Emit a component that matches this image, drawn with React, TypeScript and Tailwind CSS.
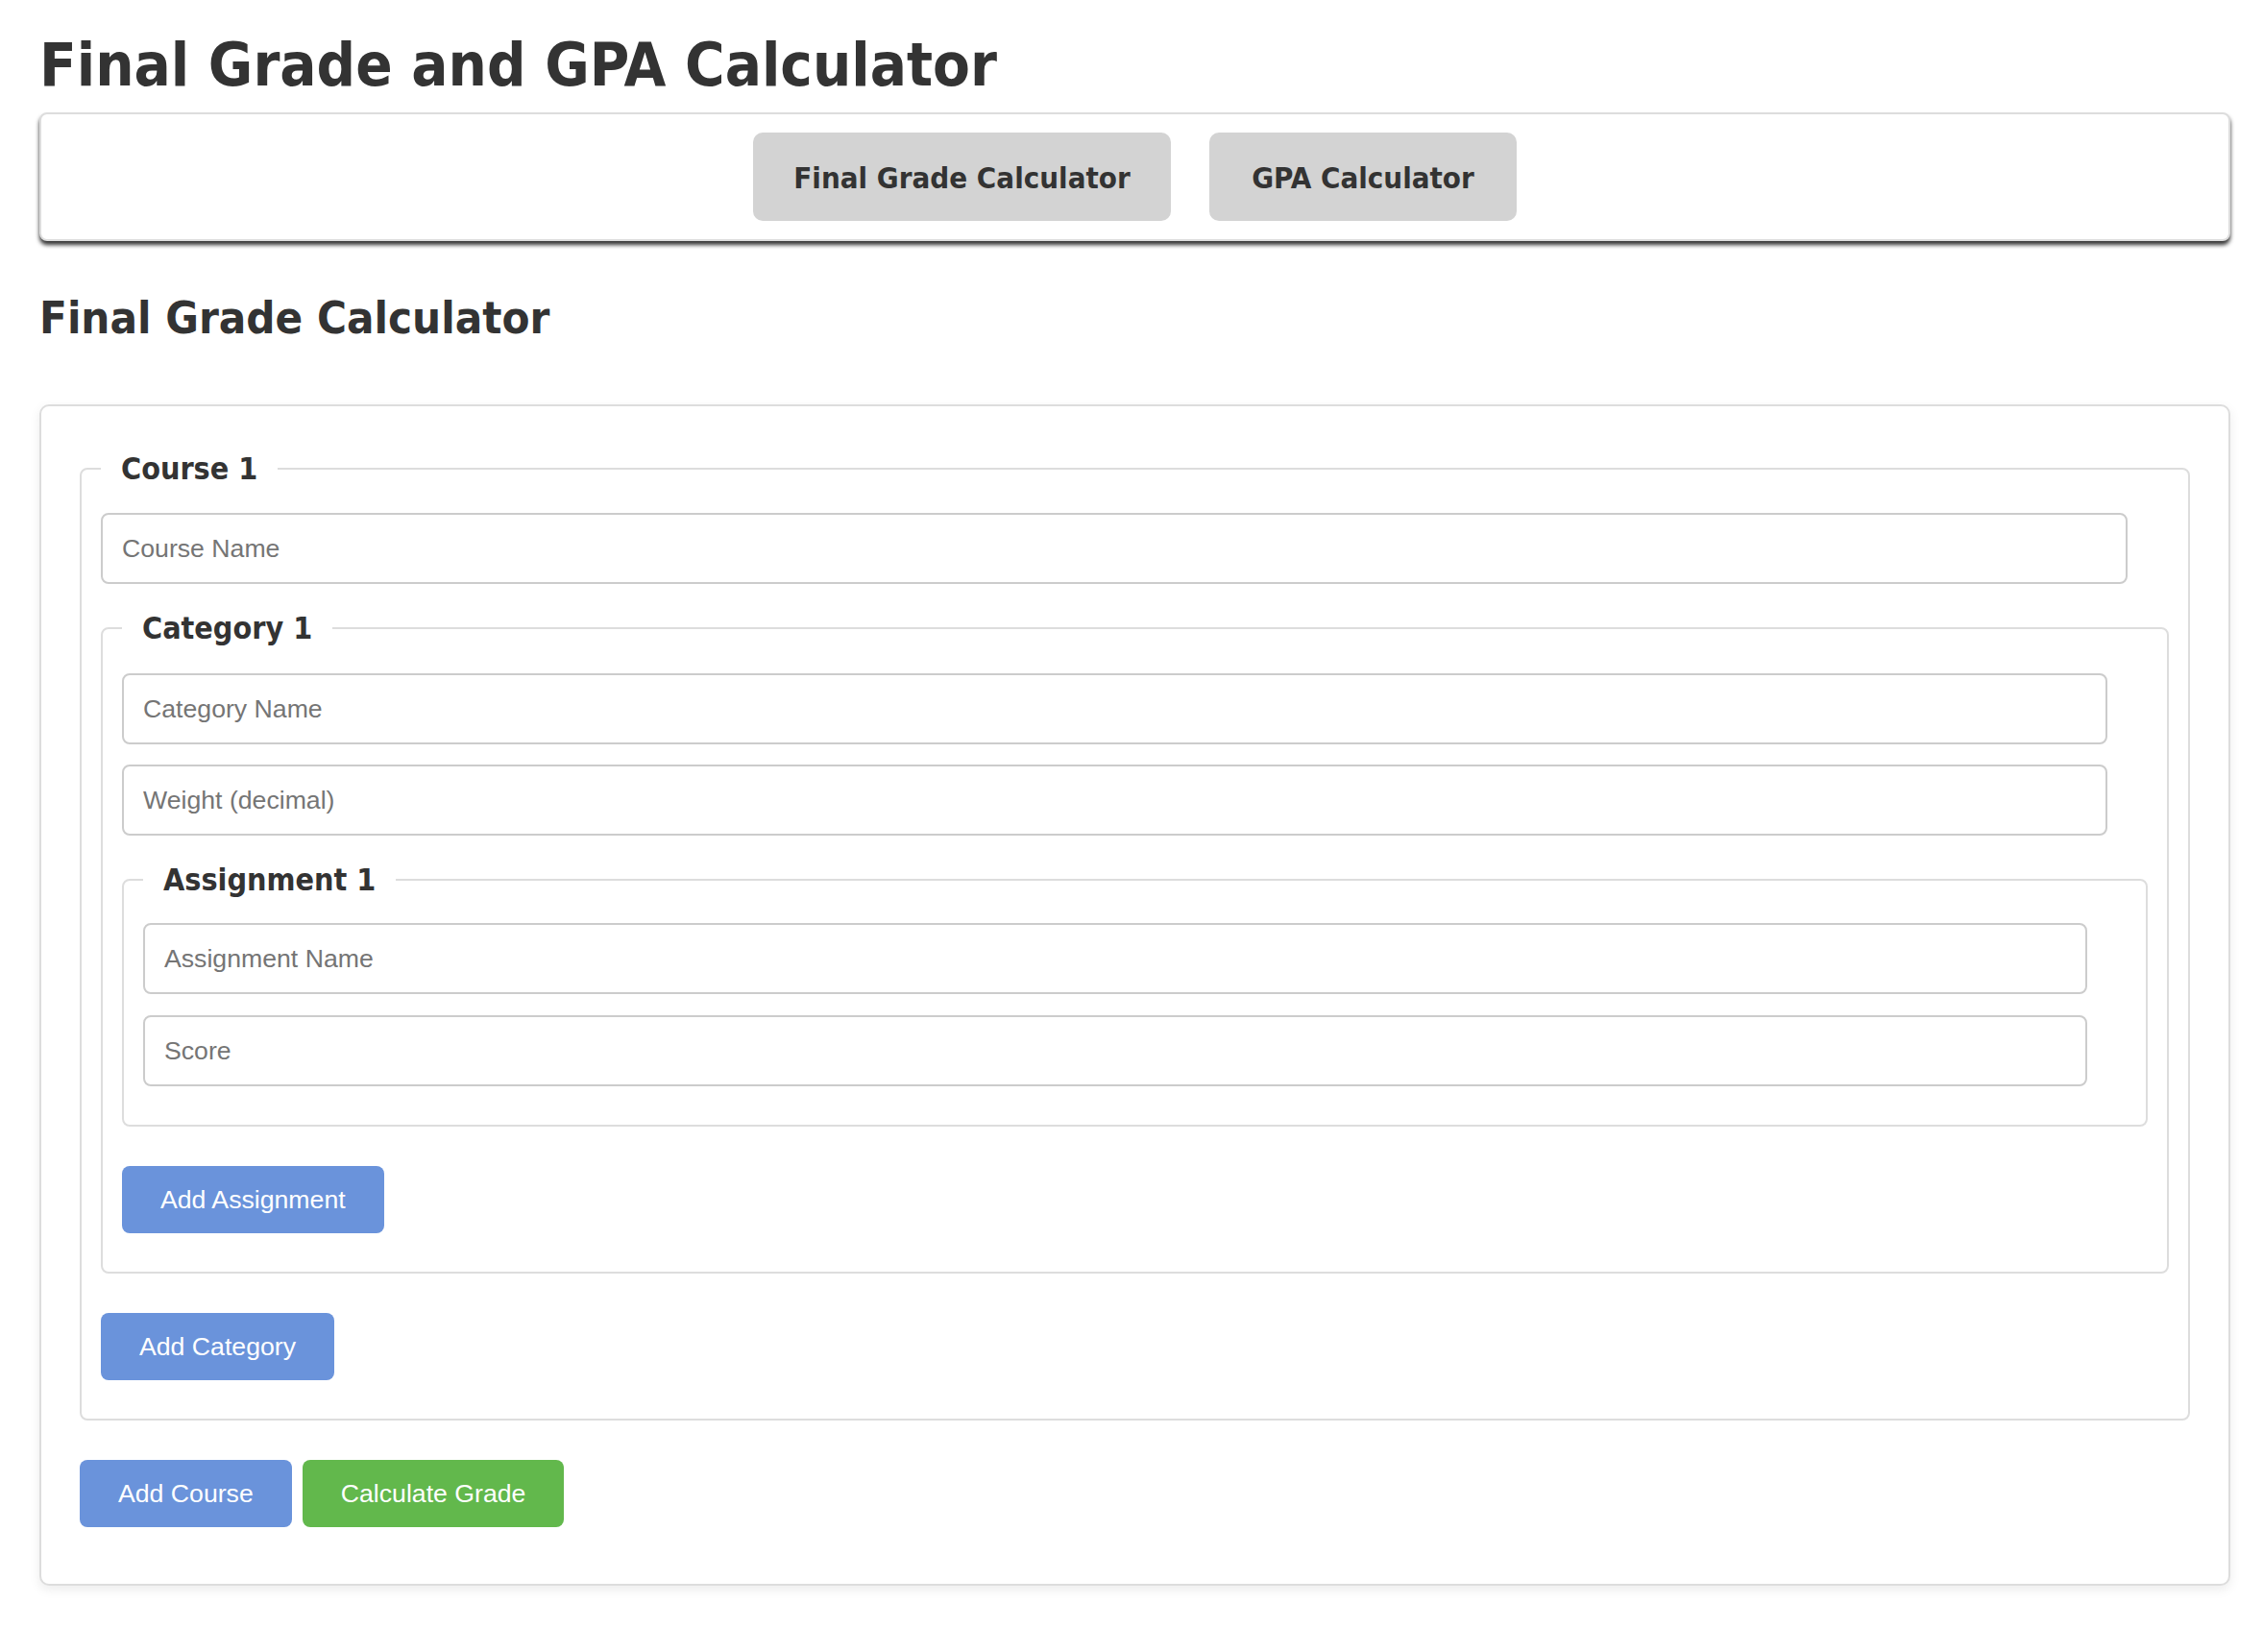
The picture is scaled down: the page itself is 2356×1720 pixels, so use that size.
import React from "react";

const head = "font-['DejaVu_Sans_Condensed','DejaVu_Sans',sans-serif] font-stretch-condensed font-bold";
const ui = "font-['Liberation_Sans',Arial,sans-serif]";

function Input({ placeholder, className = "" }: { placeholder: string; className?: string }) {
  return (
    <input
      type="text"
      placeholder={placeholder}
      className={`${ui} block box-border h-[74px] w-[98%] rounded-[8px] border-2 border-[#cccccc] bg-white px-[20px] text-[26.67px] text-[#333] placeholder:text-[#757575] outline-none ${className}`}
    />
  );
}

function Legend({ children }: { children: React.ReactNode }) {
  return (
    <legend className={`${head} px-[21px] text-[32px] leading-[40px] text-[#333]`}>{children}</legend>
  );
}

function Btn({ children, color, className = "" }: { children: React.ReactNode; color: "blue" | "green"; className?: string }) {
  return (
    <button
      type="button"
      className={`${ui} h-[70px] rounded-[8px] px-[40px] text-[26.67px] text-white ${
        color === "blue" ? "bg-[#6a93db]" : "bg-[#62b84c]"
      } ${className}`}
    >
      {children}
    </button>
  );
}

export default function App() {
  return (
    <div className="min-h-screen w-full bg-white text-[#333]">
      <div className="ml-[41px] w-[2281px] pb-[60px]">
        <h1 className={`${head} pt-[36px] text-[63px] leading-[64px]`}>Final Grade and GPA Calculator</h1>

        <div className="mt-[17px] flex justify-center gap-[40px] rounded-[8px] border-2 border-[#dddddd] bg-white py-[19px] shadow-[0_4px_4px_rgba(0,0,0,0.8)]">
          <button type="button" className={`${head} h-[92px] w-[435px] rounded-[10px] bg-[#d3d3d3] pt-[2px] text-[31px] text-[#333]`}>
            Final Grade Calculator
          </button>
          <button type="button" className={`${head} h-[92px] w-[320px] rounded-[10px] bg-[#d3d3d3] pt-[2px] text-[31px] text-[#333]`}>
            GPA Calculator
          </button>
        </div>

        <h2 className={`${head} mt-[56px] text-[47px] leading-[48px]`}>Final Grade Calculator</h2>

        <div className="mt-[66px] rounded-[10px] border-2 border-[#dddddd] bg-white px-[40px] pb-[59px] pt-[45px] shadow-[0_4px_12px_rgba(0,0,0,0.08)]">
          <fieldset className="rounded-[8px] border-2 border-[#dddddd] px-[20px] pb-[40px] pt-[26px]">
            <Legend>Course 1</Legend>
            <Input placeholder="Course Name" />

            <fieldset className="mt-[26px] rounded-[8px] border-2 border-[#dddddd] px-[20px] pb-[40px] pt-[27px]">
              <Legend>Category 1</Legend>
              <Input placeholder="Category Name" />
              <Input placeholder="Weight (decimal)" className="mt-[21px]" />

              <fieldset className="mt-[26px] rounded-[8px] border-2 border-[#dddddd] px-[20px] pb-[40px] pt-[25px]">
                <Legend>Assignment 1</Legend>
                <Input placeholder="Assignment Name" />
                <Input placeholder="Score" className="mt-[22px]" />
              </fieldset>

              <Btn color="blue" className="mt-[41px]">Add Assignment</Btn>
            </fieldset>

            <Btn color="blue" className="mt-[41px]">Add Category</Btn>
          </fieldset>

          <div className="mt-[41px] flex gap-[11px]">
            <Btn color="blue">Add Course</Btn>
            <Btn color="green">Calculate Grade</Btn>
          </div>
        </div>
      </div>
    </div>
  );
}
